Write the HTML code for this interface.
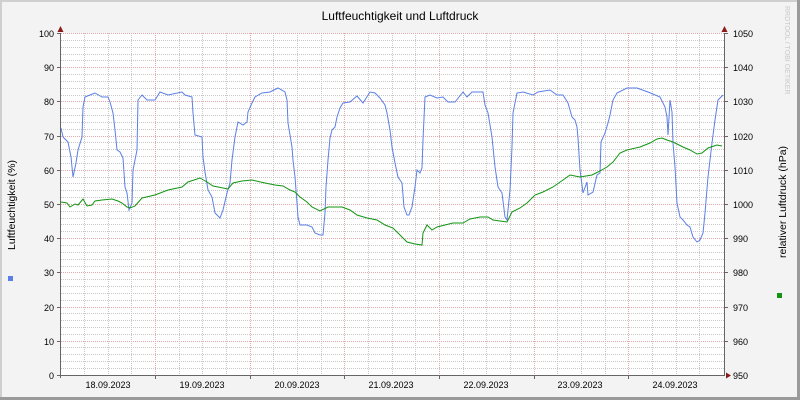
<!DOCTYPE html>
<html><head><meta charset="utf-8"><style>
html,body{margin:0;padding:0;background:#f3f3f3;}
svg{display:block;font-family:"Liberation Sans","DejaVu Sans",sans-serif;}
</style></head><body>
<svg width="800" height="400" xmlns="http://www.w3.org/2000/svg">
<rect x="0" y="0" width="800" height="400" fill="#f3f3f3"/>
<rect x="0" y="0" width="2" height="400" fill="#cfcfcf"/>
<rect x="0" y="0" width="800" height="2" fill="#cfcfcf"/>
<rect x="797" y="0" width="3" height="400" fill="#9a9a9a"/>
<rect x="0" y="397" width="800" height="3" fill="#9a9a9a"/>
<rect x="61" y="33" width="663" height="343" fill="#ffffff"/>
<g stroke="#c8c8c8" stroke-width="1" stroke-dasharray="1,1" fill="none">
<path d="M61 368.5H724M61 361.5H724M61 354.5H724M61 347.5H724M61 334.5H724M61 327.5H724M61 320.5H724M61 313.5H724M61 300.5H724M61 293.5H724M61 286.5H724M61 279.5H724M61 266.5H724M61 259.5H724M61 252.5H724M61 245.5H724M61 231.5H724M61 224.5H724M61 218.5H724M61 211.5H724M61 197.5H724M61 190.5H724M61 183.5H724M61 177.5H724M61 163.5H724M61 156.5H724M61 149.5H724M61 142.5H724M61 129.5H724M61 122.5H724M61 115.5H724M61 108.5H724M61 95.5H724M61 88.5H724M61 81.5H724M61 74.5H724M61 60.5H724M61 54.5H724M61 47.5H724M61 40.5H724"/>
<path d="M84.5 33V376M108.5 33V376M131.5 33V376M179.5 33V376M202.5 33V376M226.5 33V376M273.5 33V376M297.5 33V376M321.5 33V376M368.5 33V376M392.5 33V376M415.5 33V376M463.5 33V376M486.5 33V376M510.5 33V376M557.5 33V376M581.5 33V376M605.5 33V376M652.5 33V376M676.5 33V376M699.5 33V376"/>
</g>
<g stroke="#e3a9a9" stroke-width="1" stroke-dasharray="1,1" fill="none">
<path d="M61 341.5H724M61 307.5H724M61 272.5H724M61 238.5H724M61 204.5H724M61 170.5H724M61 136.5H724M61 101.5H724M61 67.5H724M61 33.5H724"/>
<path d="M155.5 33V376M250.5 33V376M344.5 33V376M439.5 33V376M534.5 33V376M628.5 33V376"/>
</g>
<polyline fill="none" stroke="#5b7fe6" stroke-width="1" points="61,128 63,137 68,142 71,157 73,177 76,163 78,150 82,137 83,107 85,97 90,95 95,93 102,97 108,97 110,102 113,113 115,130 117,150 120,152 123,158 125,187 127,193 129,210 132,203 133,170 137,150 138,100 142,95 147,100 155,100 160,92 168,95 182,92 185,95 192,97 193,113 195,135 202,137 203,157 205,172 208,190 212,197 215,213 220,218 223,210 227,193 230,183 232,160 235,137 238,122 243,125 247,122 248,112 252,103 255,97 262,93 270,92 278,88 285,92 287,100 288,123 292,147 293,160 295,177 297,203 298,217 300,225 307,225 312,227 315,233 320,235 323,235 325,213 326,187 328,160 330,138 332,130 335,127 337,117 340,108 343,103 350,102 357,96 363,103 370,92 375,93 380,98 385,105 387,113 390,130 392,147 395,163 398,177 402,183 404,207 407,215 409,215 412,207 415,187 417,170 420,173 422,168 423,140 425,97 430,95 437,98 443,97 448,102 455,102 463,92 467,97 472,92 483,92 485,105 488,113 492,137 495,167 498,187 502,193 505,217 507,220 510,190 512,147 513,113 517,93 523,92 533,95 538,92 550,90 557,95 563,95 568,103 572,117 575,120 577,127 578,138 580,170 583,193 587,182 588,195 593,192 597,175 600,173 601,142 605,133 608,123 610,115 613,100 617,93 627,88 637,88 648,92 660,97 665,107 667,117 668,135 670,100 672,112 673,143 675,167 677,203 680,217 683,220 687,225 690,227 693,237 697,242 700,240 703,233 705,213 708,177 712,143 715,120 718,100 723,95"/>
<polyline fill="none" stroke="#129412" stroke-width="1" points="61,202 67,203 70,207 75,204 78,205 83,199 87,206 92,205 95,201 102,200 112,199 118,201 122,203 127,207 130,208 135,206 142,198 155,195 168,190 182,187 188,182 200,178 207,182 213,186 228,189 233,183 242,181 252,180 265,183 275,185 283,186 290,190 295,192 300,197 307,202 312,207 320,211 328,207 342,207 350,210 357,215 367,218 377,220 385,225 393,228 400,235 407,242 415,244 422,245 423,233 427,225 432,230 437,227 445,225 453,223 463,223 470,219 480,217 488,217 493,220 500,221 507,222 512,212 520,208 527,203 535,195 543,192 553,187 563,180 570,175 580,177 592,175 598,172 607,167 613,162 620,153 627,150 640,147 650,143 657,139 662,138 667,140 673,142 683,147 690,150 697,154 702,153 708,148 717,145 722,146"/>
<g stroke="#666" stroke-width="1" fill="none">
<path d="M60.5 33V378M57 375.5H724M724.5 33V376"/>
<path d="M57 341.5H61M57 307.5H61M57 272.5H61M57 238.5H61M57 204.5H61M57 170.5H61M57 136.5H61M57 101.5H61M57 67.5H61M57 33.5H61"/>
<path d="M724 341.5H728M724 307.5H728M724 272.5H728M724 238.5H728M724 204.5H728M724 170.5H728M724 136.5H728M724 101.5H728M724 67.5H728M724 33.5H728"/>
<path d="M155.5 376V379M250.5 376V379M344.5 376V379M439.5 376V379M534.5 376V379M628.5 376V379"/>
</g>
<polygon points="57.5,32 63.5,32 60.5,26" fill="#8b1a1a"/>
<polygon points="721.5,32 727.5,32 724.5,26" fill="#8b1a1a"/>
<polygon points="726,372.5 726,378.5 731,375.5" fill="#8b1a1a"/>
<text x="400" y="20" font-size="12" text-anchor="middle" fill="#000">Luftfeuchtigkeit und Luftdruck</text>
<g font-size="9" fill="#000" text-anchor="end">
<text x="54" y="37">100</text><text x="54" y="71">90</text><text x="54" y="105">80</text><text x="54" y="140">70</text><text x="54" y="174">60</text><text x="54" y="208">50</text><text x="54" y="242">40</text><text x="54" y="276">30</text><text x="54" y="311">20</text><text x="54" y="345">10</text><text x="54" y="379">0</text>
</g>
<g font-size="9" fill="#000">
<text x="733" y="37">1050</text><text x="733" y="71">1040</text><text x="733" y="105">1030</text><text x="733" y="140">1020</text><text x="733" y="174">1010</text><text x="733" y="208">1000</text><text x="733" y="242">990</text><text x="733" y="276">980</text><text x="733" y="311">970</text><text x="733" y="345">960</text><text x="733" y="379">950</text>
</g>
<g font-size="9" fill="#000" text-anchor="middle">
<text x="108" y="388">18.09.2023</text><text x="202" y="388">19.09.2023</text><text x="297" y="388">20.09.2023</text><text x="391" y="388">21.09.2023</text><text x="486" y="388">22.09.2023</text><text x="580" y="388">23.09.2023</text><text x="675" y="388">24.09.2023</text>
</g>
<text transform="translate(15,205) rotate(-90)" font-size="10.5" text-anchor="middle" fill="#000">Luftfeuchtigkeit (%)</text>
<text transform="translate(786,202) rotate(-90)" font-size="10.5" text-anchor="middle" fill="#000">relativer Luftdruck (hPa)</text>
<text transform="translate(785,6) rotate(90)" font-size="7" fill="#c8c8c8">RRDTOOL / TOBI OETIKER</text>
<rect x="8" y="276" width="5" height="5" fill="#5b7fe6"/>
<rect x="777" y="293" width="5" height="5" fill="#129412"/>
</svg>
</body></html>
